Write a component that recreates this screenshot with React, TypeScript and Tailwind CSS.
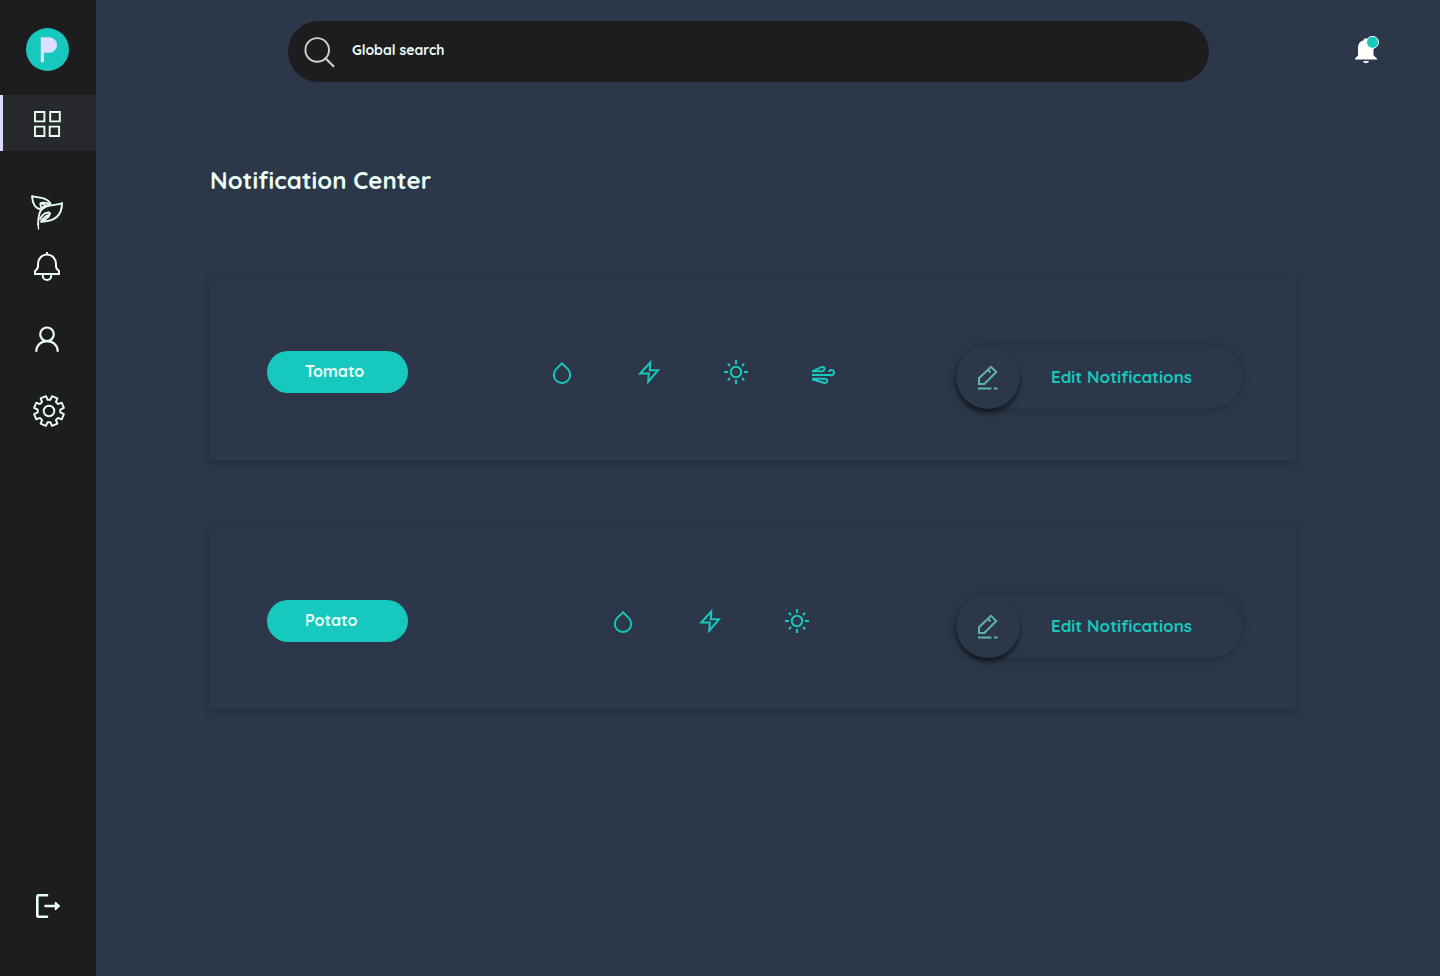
import React from "react";

const gearPath = (() => {
  const points: string[] = [];
  const rOut = 15.2;
  const rIn = 11.4;
  for (let i = 0; i < 8; i++) {
    const mid = 22.5 + i * 45;
    const tooth: [number, number][] = [
      [rIn, -15],
      [rOut, -11],
      [rOut, 11],
      [rIn, 15],
    ];
    for (const [r, d] of tooth) {
      const a = ((mid + d) * Math.PI) / 180;
      points.push(`${(17 + r * Math.cos(a)).toFixed(2)} ${(17 + r * Math.sin(a)).toFixed(2)}`);
    }
  }
  return `M${points.join("L")}Z`;
})();

function Logo() {
  return (
    <svg className="size-[43px]" viewBox="0 0 43 43" aria-hidden="true">
      <circle cx="21.5" cy="21.5" r="21.5" fill="#17c8be" />
      <path d="M14.8 9.200H23a8 7.800 0 0 1 0 15.600H18V34.200H14.800Z" fill="#dcdfff" />
    </svg>
  );
}

function GridIcon() {
  return (
    <svg className="h-[26px] w-[27px]" viewBox="0 0 27 26" fill="none" stroke="currentColor" strokeWidth="1.9" aria-hidden="true">
      <path d="M1 1h9.400v9.400H1zM16.200 1h9.600v9.400h-9.600zM1 15.600h9.400V25H1zM15.700 15.600h9.400V25h-9.400z" />
    </svg>
  );
}

function LeafIcon() {
  return (
    <svg className="h-9 w-8" viewBox="0 0 32 36" fill="none" stroke="currentColor" strokeWidth="1.9" strokeLinejoin="round" strokeLinecap="round" aria-hidden="true">
      <path d="M1 1.200C7 2.800 15 1.500 19.500 8.500M1 1.200C1.500 8 4 13.200 9.300 14.300" />
      <path d="M10.500 13C9.300 10.500 8.800 8 10 7.800C13 7.200 16 8 18.800 9C15 10 12.500 11.500 10.500 13M10.500 8.500L14 10" strokeWidth="1.800" />
      <path d="M31 8.300C24 11 13 8.500 8.800 17.500C7.200 22 7 26 7.200 30" />
      <path d="M7.200 29L7.500 34" strokeWidth="1.300" />
      <path d="M31 8.300C31 19 25.500 26.500 10 26.800C13 25.500 18.500 22 19 18.500C19 16.500 12.500 17 9 24M10 26.800C11 24 14 21.500 18 19.500" />
    </svg>
  );
}

function BellIcon() {
  return (
    <svg className="h-[30px] w-[26px]" viewBox="0 0 26 30" fill="none" stroke="currentColor" strokeWidth="2" aria-hidden="true">
      <path d="M13 0V3M1 22V19C2.500 18 4 17 4 14V12A9 9.500 0 0 1 22 12V14C22 17 23.500 18 25 19V22ZM8.800 22.500V24A4.200 4 0 0 0 17.200 24V22.500" />
    </svg>
  );
}

function UserIcon() {
  return (
    <svg className="h-[26px] w-6" viewBox="0 0 24 26" fill="none" stroke="currentColor" strokeWidth="2.200" aria-hidden="true">
      <circle cx="12" cy="8.300" r="6.800" />
      <path d="M1.200 25.800C1.200 19.300 6 15.100 12 15.100S22.800 19.300 22.800 25.800" />
    </svg>
  );
}

function GearIcon() {
  return (
    <svg className="size-[34px]" viewBox="0 0 34 34" fill="none" stroke="currentColor" strokeWidth="1.900" strokeLinejoin="round" aria-hidden="true">
      <path d={gearPath} />
      <circle cx="17" cy="17" r="5.300" />
    </svg>
  );
}

function LogoutIcon() {
  return (
    <svg className="h-6 w-[25px]" viewBox="0 0 25 24" fill="none" stroke="currentColor" strokeWidth="2.600" strokeLinecap="round" strokeLinejoin="round" aria-hidden="true">
      <path d="M11 1.300H2.500Q1.300 1.300 1.300 2.500V21.500Q1.300 22.700 2.500 22.700H11M9.500 12H19" />
      <path d="M19.500 8.500L23.300 12L19.500 15.500Z" fill="currentColor" strokeWidth="1.500" />
    </svg>
  );
}

function EditIcon() {
  return (
    <svg className="h-[26px] w-5" viewBox="0 0 20 26" fill="none" stroke="currentColor" strokeWidth="2" aria-hidden="true">
      <path d="M1 20V14.300L13 2.800L18.300 8L6.300 20ZM10 5.800L12.500 8.500" />
      <path d="M0 24.500H13.500M16 24.500H19.500" />
    </svg>
  );
}

const icons = {
  water: { label: "Water", path: "M12 3.300L17.900 9.100A8.200 8.200 0 1 1 6.100 9.100Z" },
  power: { label: "Power", path: "M13.300 2.400L3.200 13.500H11.800L11.200 21.800L21 10.200H12.800Z" },
  light: {
    label: "Light",
    path: "M12 6.800A5.200 5.200 0 1 1 12 17.200A5.200 5.200 0 1 1 12 6.800ZM12 0V4M12 20V24M0 12H4M20 12H24M3.800 3.800L6 6M18 18L20.200 20.200M3.800 20.200L6 18M18 6L20.200 3.800",
  },
  wind: {
    label: "Wind",
    path: "M1 15H19.500A2.700 2.500 0 1 0 17.800 11.800M1 11.300L10.500 7.200C12.800 6.200 14.200 8.400 13 10Q12.300 11.300 11 11.300H1M1 18.700H14C16 18.700 16.500 20.500 16 21.800Q15.300 23.200 13.500 22.900L1 19.200",
  },
};

type Plant = { name: string; sensors: (keyof typeof icons)[]; inset: string };

const plants: Plant[] = [
  { name: "Tomato", sensors: ["water", "power", "light", "wind"], inset: "pl-[21px]" },
  { name: "Potato", sensors: ["water", "power", "light"], inset: "pl-14" },
];

function PlantCard({ name, sensors, inset }: Plant) {
  return (
    <section className="grid grid-cols-[141px_1fr_286px] bg-[#2c3749] pt-[70px] pr-[54px] pb-[51px] pl-[57px] shadow-[0_4px_8px_rgba(0,0,0,0.16)]">
      <div className="flex items-center pb-[10px]">
        <h2 className="h-[42px] w-full rounded-full bg-[#17c8be] pl-[38px] text-base leading-[40px] font-bold text-[#eafff8]">
          {name}
        </h2>
      </div>
      <ul className={`flex items-center justify-center gap-[63px] pb-[10px] text-[#17c8be] ${inset}`}>
        {sensors.map((key) => {
          const { label, path } = icons[key];
          return (
            <li key={key} title={label}>
              <svg className="size-6" viewBox="0 0 24 24" fill="none" stroke="currentColor" strokeWidth="2" aria-hidden="true">
                <path d={path} />
              </svg>
            </li>
          );
        })}
      </ul>
      <button
        type="button"
        className="flex h-16 items-center rounded-full bg-[#2c3749] text-[17px] font-bold text-[#17c8be] shadow-[0_1px_9px_rgba(0,0,0,0.25)]"
      >
        <span className="flex size-16 items-center justify-center rounded-full text-[#62b3ad] shadow-[0_4px_4px_rgba(0,0,0,0.5)]">
          <EditIcon />
        </span>
        <span className="pl-[31px]">Edit Notifications</span>
      </button>
    </section>
  );
}

export default function App() {
  return (
    <div className="flex min-h-screen bg-[#2c3749] font-[Quicksand,Lato,sans-serif] text-[#eafff8]">
      <nav className="flex w-24 shrink-0 flex-col items-center bg-[#1d1d1f] pt-7 pb-[58px]" aria-label="Main">
        <a href="#home" aria-label="Home" className="pr-0.5">
          <Logo />
        </a>
        <a
          href="#dashboard"
          aria-label="Dashboard"
          className="mt-6 flex h-14 w-full items-center justify-center border-l-[3px] border-[#dcdfff] bg-[#27292c] pt-0.5 pr-1"
        >
          <GridIcon />
        </a>
        <a href="#plants" aria-label="Plants" className="mt-11 pr-0.5">
          <LeafIcon />
        </a>
        <a href="#notifications" aria-label="Notifications" className="mt-[21px] pr-0.5">
          <BellIcon />
        </a>
        <a href="#profile" aria-label="Profile" className="mt-11 pr-0.5">
          <UserIcon />
        </a>
        <a href="#settings" aria-label="Settings" className="mt-[42px] pl-0.5">
          <GearIcon />
        </a>
        <button type="button" aria-label="Log out" className="mt-auto">
          <LogoutIcon />
        </button>
      </nav>
      <div className="min-w-0 flex-1">
        <header className="flex items-center pt-[21px] pl-48">
          <label className="flex h-[61px] flex-1 items-center rounded-full bg-[#1d1d1f] pl-4">
            <svg className="size-8 shrink-0" viewBox="0 0 32 32" fill="none" stroke="#d0d0d0" strokeWidth="1.900" aria-hidden="true">
              <circle cx="13.200" cy="13.900" r="11.800" />
              <path d="M21.500 22.200L30 30.800" strokeWidth="2.200" />
            </svg>
            <input
              type="search"
              aria-label="Global search"
              placeholder="Global search"
              className="mr-8 ml-4 h-full min-w-0 flex-1 bg-transparent pb-1 text-sm font-bold outline-none placeholder:text-[#eafff8]"
            />
          </label>
          <div className="flex w-[231px] shrink-0 justify-end pr-[60px] pb-1">
            <button type="button" aria-label="Alerts">
              <svg className="h-7 w-[26px]" viewBox="0 0 26 28" aria-hidden="true">
                <path d="M9.500 4.500C9.500 1.500 14 1.500 14 4.500C18 5 19.500 8 19.500 12V19.500L23 22.500V23.500H1V22.500L4 19.500V12C4 8 6 5 9.500 4.500Z" fill="#fff" />
                <path d="M9 25H15C14.500 28 9.500 28 9 25Z" fill="#e7eaf0" />
                <circle cx="18.500" cy="6.300" r="6" fill="#17c8be" stroke="#fff" />
              </svg>
            </button>
          </div>
        </header>
        <main className="pt-[82px] pr-36 pb-16 pl-[114px]">
          <h1 className="text-2xl leading-8 font-bold">Notification Center</h1>
          <div className="mt-[79px] flex flex-col gap-16">
            {plants.map((plant) => (
              <PlantCard key={plant.name} {...plant} />
            ))}
          </div>
        </main>
      </div>
    </div>
  );
}
